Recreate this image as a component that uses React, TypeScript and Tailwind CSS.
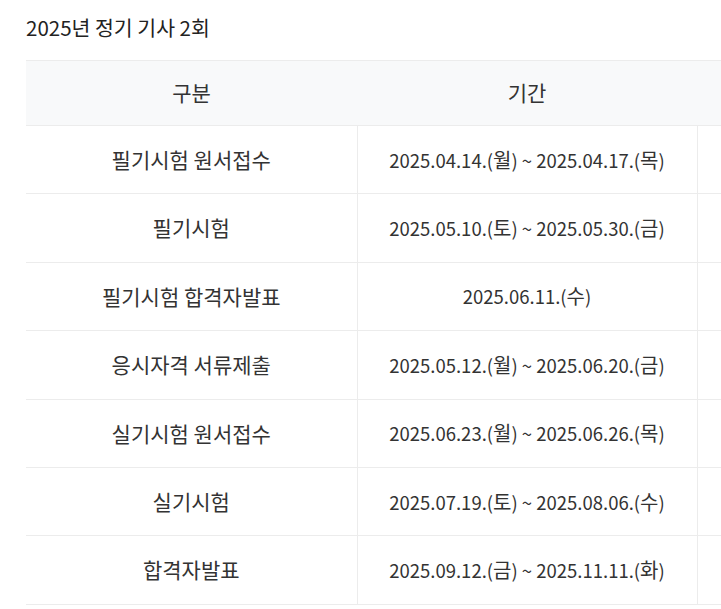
const rows = [
  { name: "필기시험 원서접수", period: "2025.04.14.(월) ~ 2025.04.17.(목)" },
  { name: "필기시험", period: "2025.05.10.(토) ~ 2025.05.30.(금)" },
  { name: "필기시험 합격자발표", period: "2025.06.11.(수)" },
  { name: "응시자격 서류제출", period: "2025.05.12.(월) ~ 2025.06.20.(금)" },
  { name: "실기시험 원서접수", period: "2025.06.23.(월) ~ 2025.06.26.(목)" },
  { name: "실기시험", period: "2025.07.19.(토) ~ 2025.08.06.(수)" },
  { name: "합격자발표", period: "2025.09.12.(금) ~ 2025.11.11.(화)" },
];

// weekday glyphs render a touch larger than the digits
function Period({ text }: { text: string }) {
  const parts = text.split(/([가-힣])/);
  return (
    <>
      {parts.map((p, i) =>
        /[가-힣]/.test(p) ? (
          <span key={i} className="text-[20px]">
            {p}
          </span>
        ) : (
          <span key={i}>{p}</span>
        )
      )}
    </>
  );
}

export default function App() {
  return (
    <div
      className="w-[721px] h-[609px] overflow-hidden bg-white pl-[26px] text-[#333]"
      style={{ fontFamily: '"Noto Sans CJK KR", "Noto Sans", sans-serif' }}
    >
      <h2 className="pt-[13px] h-[60px] text-[20.5px] leading-[28px] font-normal text-[#222]">
        2025년 정기 기사 2회
      </h2>
      <table className="w-[900px] table-fixed border-collapse">
        <colgroup>
          <col className="w-[331px]" />
          <col className="w-[340px]" />
          <col className="w-[229px]" />
        </colgroup>
        <thead>
          <tr className="h-[65px] bg-[#f8f9fa] border-y border-[#ececec] text-[21px]">
            <th className="font-normal text-center">구분</th>
            <th className="font-normal text-center">기간</th>
            <th className="font-normal text-center"></th>
          </tr>
        </thead>
        <tbody>
          {rows.map((r) => (
            <tr key={r.name} className="h-[68.4px] border-b border-[#ececec]">
              <td className="text-center text-[21px]">{r.name}</td>
              <td className="text-center text-[18.5px] whitespace-pre border-x border-[#ececec]">
                <Period text={r.period} />
              </td>
              <td></td>
            </tr>
          ))}
        </tbody>
      </table>
    </div>
  );
}
